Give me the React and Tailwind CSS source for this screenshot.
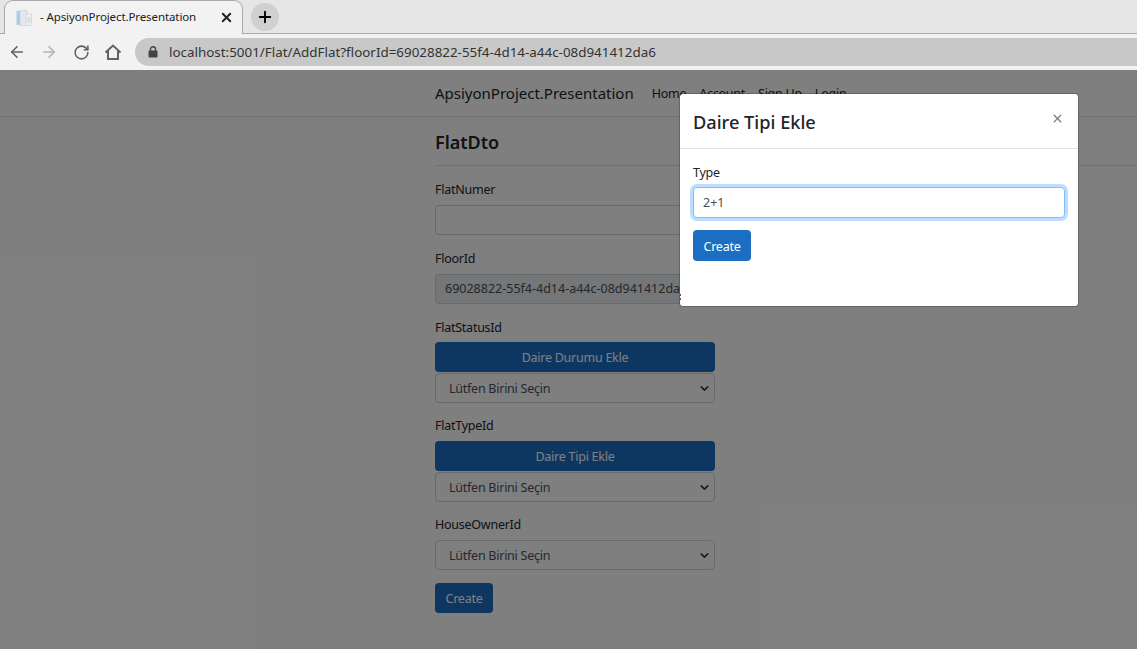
import React from "react";
import { ArrowLeft, ArrowRight, RotateCw, X, Plus, ChevronDown } from "lucide-react";

const font = { fontFamily: '"Noto Sans", "Open Sans", sans-serif' };

const Favicon = () => (
  <svg width="16" height="16" viewBox="0 0 16 16">
    <rect x="0.5" y="1" width="4" height="14" fill="#a9cdea" />
    <rect x="4" y="0.5" width="7" height="15" fill="#e4e8ee" stroke="#c6ccd6" strokeWidth="0.6" />
    <rect x="10" y="4" width="5.5" height="11.5" fill="#eef0f4" stroke="#c6ccd6" strokeWidth="0.6" />
    <path d="M11 8h3.5M11 10h3.5M11 12h3.5" stroke="#c2c8d2" strokeWidth="0.8" />
  </svg>
);

const HomeIcon = () => (
  <svg width="18" height="18" viewBox="0 0 18 18" fill="none" stroke="#5f6368" strokeWidth="2" className="ml-[14px]">
    <path d="M1.5 9.5 9 2.5l7.5 7" />
    <path d="M4 8v8h10V8" />
  </svg>
);

const LockIcon = () => (
  <svg width="10" height="12" viewBox="0 0 10 12">
    <rect x="0.5" y="4.5" width="9" height="7" rx="1" fill="#444" />
    <path d="M2.5 5V3.2a2.5 2.5 0 0 1 5 0V5" fill="none" stroke="#444" strokeWidth="1.4" />
  </svg>
);

const Field = ({ label, className, children }) => (
  <div className={className}>
    <label className="block h-[21px] text-[12.5px] leading-[21px] tracking-[-0.25px] text-[#212529]">{label}</label>
    {children}
  </div>
);

const SelectBox = () => (
  <div className="flex h-[30px] w-[280px] items-center justify-between rounded-[4px] border border-[#ced4da] bg-white pl-[13px] pr-[3px] text-[12.5px] tracking-[-0.25px] text-[#495057]">
    <span className="pt-[2px]">Lütfen Birini Seçin</span>
    <ChevronDown size={13} strokeWidth={3} className="text-[#343a40]" />
  </div>
);

const BlueButton = ({ children, className }) => (
  <button className={`h-[30px] rounded-[4px] bg-[#1b6ec2] pt-[3px] text-[12.5px] tracking-[-0.25px] text-white ${className}`}>{children}</button>
);

const BrowserBar = () => (
  <div className="h-[70px] w-full bg-[#f2f2f2]">
    <div className="flex h-[34px] items-end border-b border-[#a9a9a9] bg-[#e6e6e6] pl-[4px]">
      <div className="relative -mb-px flex h-[34px] w-[239px] items-center rounded-t-[9px] border border-b-0 border-[#a9a9a9] bg-[#f2f2f2] pl-[11px] pr-[8px] text-[11.5px] tracking-[-0.1px] text-[#202124]">
        <Favicon />
        <span className="ml-[8px] flex-1 pb-[2px]">- ApsiyonProject.Presentation</span>
        <X size={15} strokeWidth={3} className="text-[#222]" />
      </div>
      <div className="mb-[2px] ml-[8px] flex h-[28px] w-[28px] items-center justify-center rounded-full bg-[#d0d0d0]">
        <Plus size={18} strokeWidth={2.5} className="text-black" />
      </div>
    </div>
    <div className="flex h-[36px] items-center pl-[8px]">
      <ArrowLeft size={18} strokeWidth={2.2} className="text-[#5f6368]" />
      <ArrowRight size={18} strokeWidth={2.2} className="ml-[14px] text-[#b4b4b4]" />
      <RotateCw size={17} strokeWidth={2.2} className="ml-[15px] text-[#5f6368]" />
      <HomeIcon />
      <div className="ml-[13px] flex h-[28px] flex-1 items-center rounded-l-full bg-[#c8c8c8] pl-[13px] text-[13.4px] text-[#333]">
        <LockIcon />
        <span className="ml-[11px]">localhost:5001/Flat/AddFlat?floorId=69028822-55f4-4d14-a44c-08d941412da6</span>
      </div>
    </div>
  </div>
);

const Page = () => (
  <div className="h-[579px] overflow-hidden bg-white">
    <nav className="flex h-[47px] items-center border-b border-[#dee2e6] pl-[435px] shadow-[0_2px_4px_rgba(0,0,0,0.05)]">
      <span className="text-[15px] text-[#212529]">ApsiyonProject.Presentation</span>
      <div className="ml-[18px] flex gap-[13px] pt-[3px] text-[12.5px] tracking-[-0.25px] text-[#212529]">
        <span>Home</span>
        <span>Account</span>
        <span>Sign Up</span>
        <span>Login</span>
      </div>
    </nav>
    <div className="pl-[435px]">
      <h4 className="mt-[12px] h-[37px] border-b border-[#dee2e6] text-[18px] font-semibold leading-[27px] text-[#212529]">FlatDto</h4>
      <Field label="FlatNumer" className="mt-[13px]">
        <div className="mt-[5px] h-[30px] w-[280px] rounded-[4px] border border-[#ced4da] bg-white" />
      </Field>
      <Field label="FloorId" className="mt-[13px]">
        <div className="mt-[5px] flex h-[30px] w-[280px] items-center overflow-hidden whitespace-nowrap rounded-[4px] border border-[#ced4da] bg-[#e9ecef] pl-[9px] text-[12.5px] text-[#495057]">
          69028822-55f4-4d14-a44c-08d941412da6
        </div>
      </Field>
      <Field label="FlatStatusId" className="mt-[13px]">
        <BlueButton className="mt-[4px] block w-[280px]">Daire Durumu Ekle</BlueButton>
        <div className="mt-px"><SelectBox /></div>
      </Field>
      <Field label="FlatTypeId" className="mt-[12px]">
        <BlueButton className="mt-[5px] block w-[280px]">Daire Tipi Ekle</BlueButton>
        <div className="mt-px"><SelectBox /></div>
      </Field>
      <Field label="HouseOwnerId" className="mt-[12px]">
        <div className="mt-[5px]"><SelectBox /></div>
      </Field>
      <BlueButton className="mt-[13px] block w-[58px]">Create</BlueButton>
    </div>
  </div>
);

const Modal = () => (
  <div className="absolute left-[679px] top-[23px] h-[214px] w-[400px] rounded-[4px] border border-black/20 bg-white bg-clip-padding">
    <div className="flex h-[55px] items-start justify-between border-b border-[#dee2e6] pl-[13px] pr-[14px]">
      <h5 className="mt-[15px] text-[18.2px] font-medium leading-[26px] text-[#212529]">Daire Tipi Ekle</h5>
      <X size={13} strokeWidth={2.6} className="mt-[18px] text-[#808080]" />
    </div>
    <div className="px-[13px]">
      <label className="mt-[13px] block h-[21px] text-[12.5px] leading-[21px] tracking-[-0.25px] text-[#212529]">Type</label>
      <div className="mt-[4px] flex h-[31px] w-[372px] items-center rounded-[4px] border border-[#80bdff] bg-white pl-[9px] pt-[2px] text-[12.5px] text-[#495057] shadow-[0_0_0_3px_rgba(0,123,255,0.25)]">
        2+1
      </div>
      <BlueButton className="mt-[12px] block h-[31px] w-[58px]">Create</BlueButton>
    </div>
    <div className="absolute left-0 top-[200px] h-[2px] w-px bg-[#555]" />
    <div className="absolute left-0 top-[204px] h-[2px] w-px bg-[#555]" />
  </div>
);

const App = () => (
  <div className="h-[649px] w-[1137px] overflow-hidden" style={font}>
    <BrowserBar />
    <div className="relative">
      <Page />
      <div className="absolute inset-0 bg-black/50" />
      <Modal />
    </div>
  </div>
);

export default App;
